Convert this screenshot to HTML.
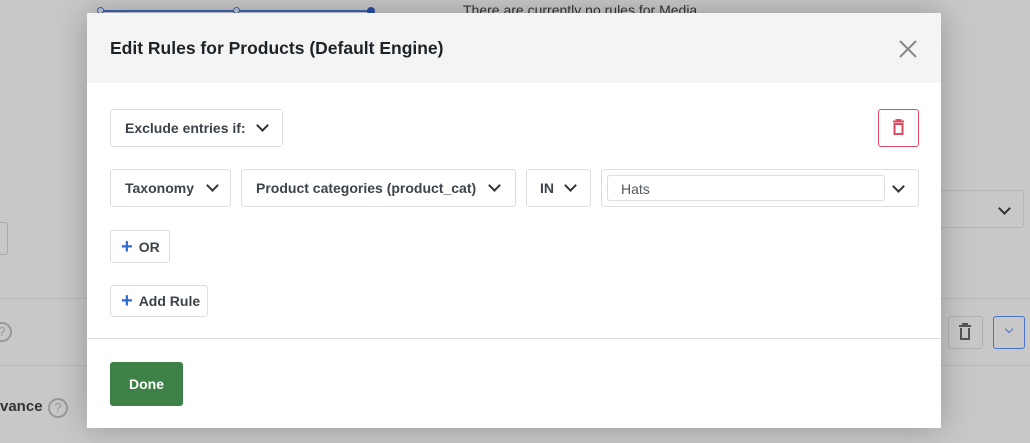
<!DOCTYPE html>
<html><head><style>
*{box-sizing:border-box;margin:0;padding:0}
body{width:1030px;height:443px;overflow:hidden;background:#c8c8c8;font-family:"Liberation Sans",sans-serif;position:relative}
.a{position:absolute}
.box{position:absolute;background:#fff;border:1px solid #ddd;border-radius:3px;color:#3c434a;font-weight:bold;font-size:14px;display:flex;align-items:center}
.chev{display:inline-block;width:9px;height:9px;border-right:2px solid #333;border-bottom:2px solid #333;transform:rotate(45deg);margin-top:-5px}
.plus{color:#2d6bd1;font-size:20px;font-weight:bold;margin-right:6px;line-height:1}
</style></head><body>
<div class="a" style="left:100px;top:10px;width:271px;height:2px;background:#3e63b8"></div>
<div class="a" style="left:97px;top:7px;width:7px;height:7px;border:1px solid #3e63b8;border-radius:50%;background:#c8c8c8"></div>
<div class="a" style="left:233px;top:7px;width:7px;height:7px;border:1px solid #3e63b8;border-radius:50%;background:#c8c8c8"></div>
<div class="a" style="left:367px;top:7px;width:8px;height:8px;border-radius:50%;background:#2a4fa8"></div>
<div class="a" style="left:463px;top:2px;font-size:14px;color:#333">There are currently no rules for Media.</div>
<div class="a" style="left:-5px;top:222px;width:13px;height:33px;border:1px solid #aaa;border-radius:3px"></div>
<div class="a" style="left:940px;top:190px;width:84px;height:38px;border:1px solid #b5b5b5;border-radius:3px"></div>
<div class="a" style="left:1000px;top:200px"><span class="chev"></span></div>
<div class="a" style="left:0;top:298px;width:1030px;height:1px;background:#b8b8b8"></div>
<div class="a" style="left:0;top:365px;width:1030px;height:1px;background:#b8b8b8"></div>
<div class="a" style="left:-8px;top:322px;width:20px;height:20px;border:2px solid #999;border-radius:50%;color:#999;font-size:13px;text-align:center;line-height:16px">?</div>
<div class="a" style="left:0;top:398px;font-size:15px;font-weight:bold;color:#333">vance</div>
<div class="a" style="left:48px;top:398px;width:20px;height:20px;border:2px solid #999;border-radius:50%;color:#999;font-size:13px;text-align:center;line-height:16px">?</div>
<div class="a" style="left:948px;top:316px;width:35px;height:33px;border:1px solid #b0b0b0;border-radius:3px"></div>
<svg class="a" style="left:958px;top:323px" width="14" height="18" viewBox="0 0 14 18"><path d="M1 3h12M5 3V1h4v2M3 5v11h8V5" fill="none" stroke="#555" stroke-width="2"/></svg>
<div class="a" style="left:993px;top:316px;width:32px;height:33px;border:1px solid #4a72c9;border-radius:3px"></div>
<div class="a" style="left:1006px;top:326px;width:6px;height:6px;border-right:1.5px solid #4a72c9;border-bottom:1.5px solid #4a72c9;transform:rotate(45deg)"></div>

<div class="a" style="left:87px;top:13px;width:854px;height:415px;background:#fff;box-shadow:0 0 30px rgba(0,0,0,.25)">
 <div class="a" style="left:0;top:0;width:854px;height:70px;background:#f4f4f4"></div>
 <div class="a" style="left:23px;top:25px;font-size:17.5px;font-weight:bold;color:#1d2327">Edit Rules for Products (Default Engine)</div>
 <svg class="a" style="left:812px;top:27px" width="18" height="18"><path d="M1 1L17 17M17 1L1 17" stroke="#888" stroke-width="2"/></svg>
 <div class="box" style="left:23px;top:96px;width:173px;height:38px;padding-left:14px">Exclude entries if:<span class="chev" style="margin-left:12px"></span></div>
 <div class="a" style="left:791px;top:96px;width:41px;height:38px;border:1px solid #e04a62;border-radius:3px"></div>
 <svg class="a" style="left:805px;top:106px" width="13" height="18" viewBox="0 0 13 18"><path d="M1 2.5h11M4.5 2.5V1h4v1.5M2.5 5v10h8V5z" fill="none" stroke="#e04a62" stroke-width="2"/></svg>
 <div class="box" style="left:23px;top:156px;width:121px;height:38px;padding-left:14px">Taxonomy<span class="chev" style="margin-left:14px"></span></div>
 <div class="box" style="left:154px;top:156px;width:275px;height:38px;padding-left:14px">Product categories (product_cat)<span class="chev" style="margin-left:14px"></span></div>
 <div class="box" style="left:439px;top:156px;width:65px;height:38px;padding-left:13px">IN<span class="chev" style="margin-left:12px"></span></div>
 <div class="box" style="left:514px;top:156px;width:318px;height:38px"></div>
 <div class="a" style="left:520px;top:162px;width:278px;height:26px;border:1px solid #ddd;border-radius:3px;font-size:14px;color:#50575e;padding:5px 0 0 13px">Hats</div>
 <div class="a" style="left:807px;top:165px"><span class="chev"></span></div>
 <div class="box" style="left:23px;top:217px;width:60px;height:33px;padding-left:10px"><span class="plus">+</span>OR</div>
 <div class="box" style="left:23px;top:272px;width:98px;height:32px;padding-left:10px"><span class="plus">+</span>Add Rule</div>
 <div class="a" style="left:0;top:325px;width:854px;height:1px;background:#ddd"></div>
 <div class="a" style="left:23px;top:349px;width:73px;height:44px;background:#3d8146;border-radius:3px;color:#fff;font-weight:bold;font-size:14px;text-align:center;line-height:44px">Done</div>
</div>
</body></html>
